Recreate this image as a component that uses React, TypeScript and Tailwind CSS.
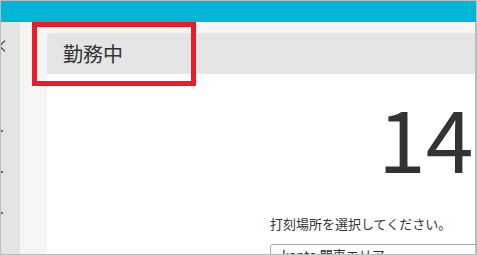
import { ChevronLeft } from "lucide-react";

const jp = { fontFamily: '"Noto Sans CJK JP", "Noto Sans", sans-serif' };

export default function App() {
  return (
    <div className="relative h-[255px] w-[477px] overflow-hidden border border-[#bcbcbc] bg-white" style={jp}>
      <div className="h-[21px] bg-[#00b5d6]" />
      <div className="flex h-[232px]">
        <aside className="relative w-[19px] shrink-0 bg-[#e4e4e4]">
          <ChevronLeft className="-ml-[9px] mt-[12px] h-[24px] w-[20px] text-[#555]" strokeWidth={1.7} />
          <div className="mt-[72px] flex flex-col gap-[39px]">
            <span className="h-[2px] w-[2px] bg-[#666]" />
            <span className="h-[2px] w-[2px] bg-[#666]" />
            <span className="h-[2px] w-[2px] bg-[#666]" />
          </div>
        </aside>
        <div className="flex-1 bg-[#f5f5f5] pl-[27px] pt-[11px]">
          <section className="h-full w-[640px] rounded-tl-[3px] bg-white">
            <header className="flex h-[41px] items-center rounded-tl-[3px] bg-[#e5e5e5] pl-[16px] text-[20px] text-[#333]">
              勤務中
            </header>
            <div className="pl-[331px] pt-[19px] text-[86px] font-normal leading-[86px] text-[#333]">14:05</div>
            <div className="pl-[223px] pt-[36px]">
              <p className="text-[13px] leading-[18px] text-[#333]">打刻場所を選択してください。</p>
              <div className="mt-[11px] h-[34px] w-[260px] rounded-[3px] border border-[#aaa] px-[11px] pt-[2px] text-[13px] leading-[16px] text-[#333]">
                kanto 関東エリア
              </div>
            </div>
          </section>
        </div>
      </div>
      <div className="absolute left-[31px] top-[21px] h-[64px] w-[164px] border-[5px] border-[#ed1c24]" />
      <div className="absolute right-0 top-[21px] h-[232px] w-px bg-[#bcbcbc]" />
    </div>
  );
}
